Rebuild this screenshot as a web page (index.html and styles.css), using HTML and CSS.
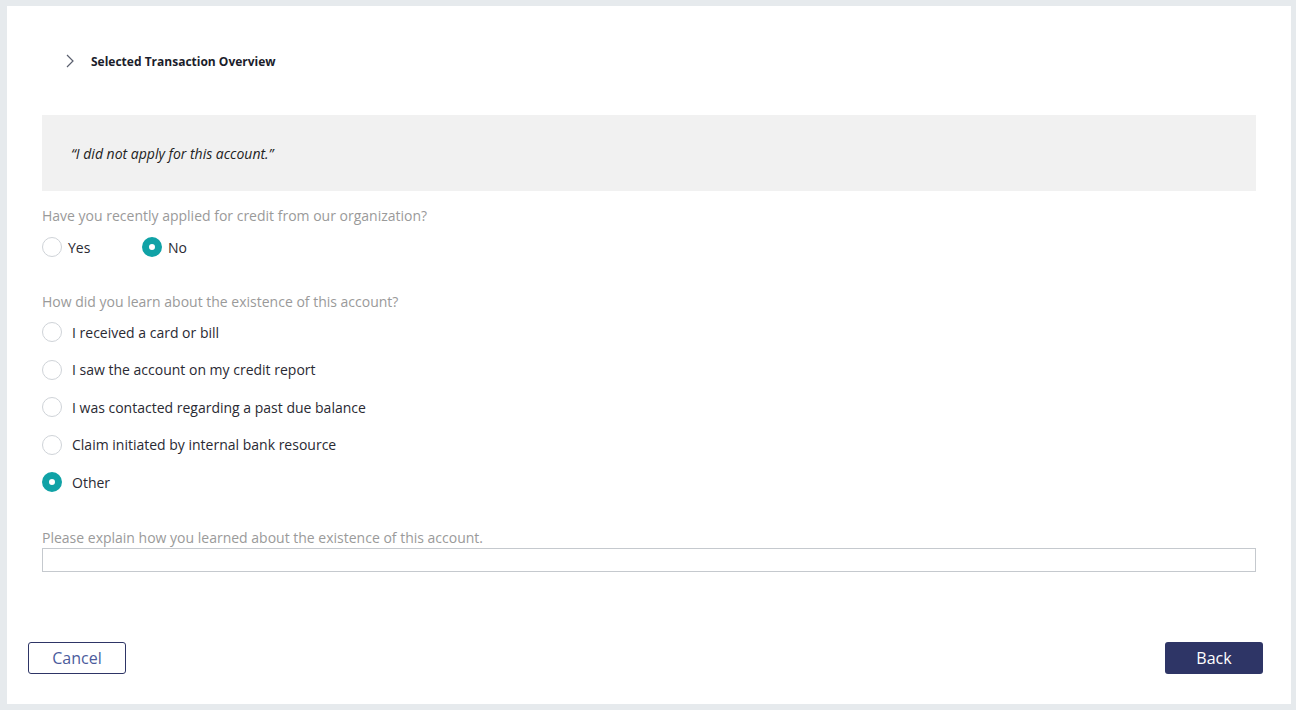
FILE: index.html
```html
<!DOCTYPE html>
<html lang="en">
<head>
  <meta charset="UTF-8">
  <title>Account Dispute</title>
  <link rel="stylesheet" href="styles.css">
</head>
<body>
  <div class="panel">
    <div class="content">
      <div class="overview">
        <svg class="chevron" width="8" height="14" viewBox="0 0 8 14"><path d="M1 1 L7 7 L1 13" fill="none" stroke="#5a5f6e" stroke-width="1.2"/></svg>
        <span class="overview-title">Selected Transaction Overview</span>
      </div>

      <div class="quote">&ldquo;I did not apply for this account.&rdquo;</div>

      <div class="question">Have you recently applied for credit from our organization?</div>
      <div class="radio-inline">
        <label class="radio"><span class="dot"></span>Yes</label>
        <label class="radio checked"><span class="dot"></span>No</label>
      </div>

      <div class="question q-second">How did you learn about the existence of this account?</div>
      <div class="radio-list">
        <label class="radio"><span class="dot"></span>I received a card or bill</label>
        <label class="radio"><span class="dot"></span>I saw the account on my credit report</label>
        <label class="radio"><span class="dot"></span>I was contacted regarding a past due balance</label>
        <label class="radio"><span class="dot"></span>Claim initiated by internal bank resource</label>
        <label class="radio checked"><span class="dot"></span>Other</label>
      </div>

      <div class="question q-explain">Please explain how you learned about the existence of this account.</div>
      <div class="textbox"></div>
    </div>

    <div class="actions">
      <button class="btn btn-cancel">Cancel</button>
      <button class="btn btn-back">Back</button>
    </div>
  </div>
</body>
</html>
```

FILE: styles.css
```css
body {
  margin: 0;
  background-color: #e6eaed;
  font-family: "Open Sans", "Noto Sans", sans-serif;
}
.panel {
  margin: 6px 5px 6px 7px;
  height: 698px;
  background-color: #fff;
  display: flex;
  flex-direction: column;
}
.content {
  padding: 0 35px;
}
.overview {
  display: flex;
  align-items: center;
  height: 24px;
  margin-top: 43px;
  padding-left: 24px;
}
.chevron {
  display: block;
  margin-right: 17px;
}
.overview-title {
  font-size: 12px;
  font-weight: bold;
  color: #1b1d2b;
}
.quote {
  margin-top: 42px;
  height: 76px;
  background-color: #f1f1f1;
  display: flex;
  align-items: center;
  padding-left: 29px;
  padding-top: 1px;
  box-sizing: border-box;
  font-size: 14px;
  font-style: italic;
  color: #222;
}
.question {
  margin-top: 15px;
  font-size: 14px;
  line-height: 20px;
  color: #9a9a9a;
}
.q-second {
  margin-top: 35px;
}
.q-explain {
  margin-top: 36px;
}
.radio-inline {
  display: flex;
  margin-top: 11px;
}
.radio-inline .radio {
  width: 100px;
}
.radio-inline .dot {
  margin-right: 6px;
}
.radio-list {
  display: flex;
  flex-direction: column;
  gap: 17.5px;
  margin-top: 10px;
}
.radio {
  display: flex;
  align-items: center;
  height: 20px;
  font-size: 14px;
  color: #2a2a33;
}
.dot {
  width: 20px;
  height: 20px;
  border: 1px solid #cfd3d8;
  border-radius: 50%;
  box-sizing: border-box;
  margin-right: 10px;
  background-color: #fff;
}
.checked .dot {
  border: 7px solid #10a2a6;
}
.textbox {
  height: 24px;
  border: 1px solid #c5c9ce;
  box-sizing: border-box;
}
.actions {
  margin-top: auto;
  margin-bottom: 30px;
  padding: 0 28px 0 21px;
  display: flex;
  justify-content: space-between;
}
.btn {
  width: 98px;
  height: 32px;
  border-radius: 3px;
  font-family: "Open Sans", "Noto Sans", sans-serif;
  font-size: 16px;
  cursor: pointer;
}
.btn-cancel {
  background-color: #fff;
  border: 1px solid #2e3566;
  color: #4b5b9c;
}
.btn-back {
  background-color: #2e3566;
  border: none;
  color: #fff;
}
```
